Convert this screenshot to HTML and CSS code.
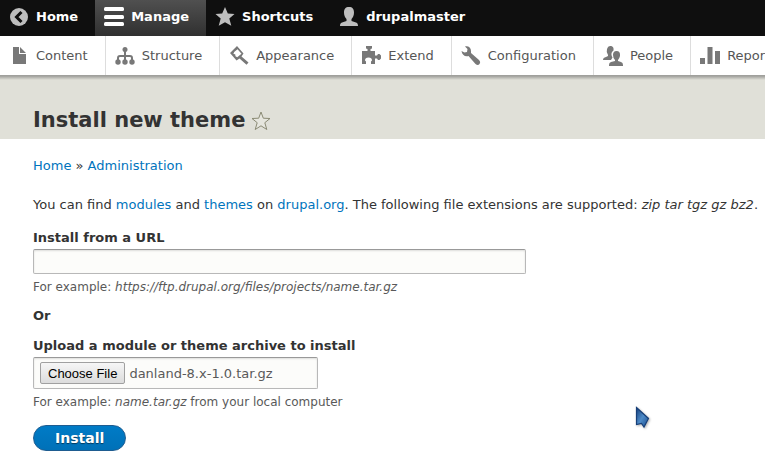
FILE: index.html
```html
<!DOCTYPE html>
<html lang="en">
<head>
<meta charset="utf-8">
<title>Install new theme</title>
<link rel="stylesheet" href="styles.css">
</head>
<body>
<nav class="bar" aria-label="Toolbar">
  <a class="tab" href="#"><svg class="icon" viewBox="0 0 20 20"><circle cx="10" cy="10" r="9" fill="#bebebe"/><path d="M12.500 5 7.500 10l5 5" fill="none" stroke="#0f0f0f" stroke-width="3"/></svg>Home</a>
  <a class="tab active" href="#"><svg class="icon" viewBox="0 0 20 20" fill="#fff"><rect y="0" width="20" height="4" rx="1.500"/><rect y="8" width="20" height="4" rx="1.500"/><rect y="15" width="20" height="4" rx="1.500"/></svg>Manage</a>
  <a class="tab" href="#"><svg class="icon" viewBox="0 0 20 20"><path d="M10 0l2.800 6.600 6.700.4-5.200 4.600 2 7.200L10 15.200l-6.300 3.600 2-7.200L.5 7l6.700-.4z" fill="#bebebe"/></svg>Shortcuts</a>
  <a class="tab" href="#"><svg class="icon" viewBox="0 0 20 20"><path d="M10 0c3.500 0 5 2 5 5.500 0 3-1 5-2.500 6.500v2l4.500 1.500c1.500.5 2 1.500 2 3.500H1c0-2 .5-3 2-3.500L7.500 14v-2C6 10.500 5 8.500 5 5.500 5 2 6.500 0 10 0z" fill="#bebebe"/></svg>drupalmaster</a>
</nav>
<nav class="tray" aria-label="Administration menu">
  <a class="item" href="#"><svg class="icon" viewBox="0 0 20 20"><path d="M4 1h6v7h7v10H4zM11 1l6 6h-6z"/></svg>Content</a>
  <a class="item" href="#"><svg class="icon" viewBox="0 0 20 20"><circle cx="10" cy="3.500" r="2.500"/><circle cx="3" cy="16" r="2.700"/><circle cx="10" cy="16" r="2.700"/><circle cx="17" cy="16" r="2.700"/><path d="M10 4v11M3 15v-3q0-2 2-2h10q2 0 2 2v3" fill="none" stroke="#787878" stroke-width="2"/></svg>Structure</a>
  <a class="item" href="#"><svg class="icon" viewBox="0 0 20 20"><path fill-rule="evenodd" d="M8 0 14.500 7.500 12.500 10.500 19.500 16.500 17.500 18.800 10.500 12.500 7.500 14.500 1 7zM8.500 3.200 5.200 6 4.400 8 6.200 8.300 6.500 10.200 8.200 11.300 12.500 7.800z"/></svg>Appearance</a>
  <a class="item" href="#"><svg class="icon" viewBox="0 0 20 20"><path d="M1 5h5.500V3L5 2.500V0h6v2.500L9.500 3v2H14v4.500h2l1-1.500h1.500l1.500 1.500v3L18.500 14H17l-1-1.500h-2V18h-4v-2.500l1-1q0-3-3.500-3t-3.500 3l1 1V18H1z"/></svg>Extend</a>
  <a class="item" href="#"><svg class="icon" viewBox="0 0 20 20"><path d="M4 .5c3-1 6 1 6 4.500v2l8 7q2 2 .5 4t-4 0l-7-8C4 11 1 9 .5 5l3 1.500L6 6l.5-3z"/></svg>Configuration</a>
  <a class="item" href="#"><svg class="icon" viewBox="0 0 20 20"><path d="M7 0c3 0 4 2 3.500 4.500C8 6 8 9 9.500 11.500L8 14H0q0-2.500 3-3l2-1V9Q3 6 4 3q.8-3 3-3z"/><path d="M13.500 5q4 0 3.500 5-.4 2-2 4v1l3 1q2 .7 2 3v1H6v-1q0-2.300 2-3l4-1v-1q-2-2-2-5 0-4 3.500-4z"/></svg>People</a>
  <a class="item" href="#"><svg class="icon" viewBox="0 0 20 20"><path d="M0 12h5v6H0zM7.500 1h5v17h-5zM15 5h5v13h-5z"/></svg>Reports</a>
</nav>
<header class="title">
  <h1>Install new theme</h1>
  <button class="star" type="button" aria-label="Add to shortcuts"><svg width="20" height="20" viewBox="0 0 20 20"><path d="M10 1l2.300 6.200 6.700.3-5.200 4.200 2 6.800L10 14.800l-5.800 3.700 2-6.800L1 7.500l6.700-.3z" fill="#e6e6de" stroke="#8a8a74"/></svg></button>
</header>
<main class="content">
  <nav class="crumbs" aria-label="Breadcrumb"><a href="#">Home</a> » <a href="#">Administration</a></nav>
  <p class="intro">You can find <a href="#">modules</a> and <a href="#">themes</a> on <a href="#">drupal.org</a>. The following file extensions are supported: <em>zip tar tgz gz bz2</em>.</p>
  <form>
    <label class="label" for="url">Install from a URL</label>
    <input class="field url" id="url" type="url">
    <p class="hint">For example: <em>https://ftp.drupal.org/files/projects/name.tar.gz</em></p>
    <p class="label or">Or</p>
    <label class="label" for="archive">Upload a module or theme archive to install</label>
    <input class="field file" id="archive" type="file">
    <p class="hint">For example: <em>name.tar.gz</em> from your local computer</p>
    <button class="install" type="button">Install</button>
  </form>
</main>
<svg class="pointer" width="16" height="24" viewBox="0 0 16 24" aria-hidden="true"><defs><linearGradient id="blue" x2="1" y2="1"><stop stop-color="#143f7c"/><stop offset=".5" stop-color="#4e8bc8"/><stop offset="1" stop-color="#164a8c"/></linearGradient></defs><path d="M1.500 1.500 13.500 12.500 9 21 6.500 17.500l-5 1z" fill="url(#blue)" stroke="#173f78" stroke-width="1.200"/></svg>
<script src="script.js"></script>
</body>
</html>
```
FILE: styles.css
```css
body {
  margin: 0;
  background: #fff;
  color: #333;
  font: 13px/20px "DejaVu Sans", sans-serif;
  overflow-x: hidden;
}
a { color: #0074bd; text-decoration: none; }
.bar, .tray { display: flex; white-space: nowrap; }
.bar { background: #0f0f0f; }
.tab, .item {
  display: flex;
  flex: none;
  align-items: center;
  gap: 7px;
  box-sizing: border-box;
  padding: 0 17px 0 9px;
}
.tab { height: 36px; padding-bottom: 3px; color: #fff; font-weight: bold; }
.active { background: linear-gradient(#505050, #303030); }
.icon { flex: none; width: 20px; height: 20px; }
.tray {
  overflow: hidden;
  background: #fff;
  border-bottom: 1px solid #a0a09c;
}
.item { height: 39px; border-right: 1px solid #ddd; color: #565656; }
.item .icon { fill: #787878; }
.title {
  display: flex;
  align-items: center;
  gap: 6px;
  padding: 29px 32px 3px 33px;
  background: linear-gradient(#a0a09c, #e0e0d8 4px);
}
h1 { margin: 0; font-size: 21px; line-height: 31px; }
.star { display: flex; padding: 0; border: 0; background: none; }
.content { padding: 17px 0 16px 33px; }
.intro { margin: 19px 0 13px; }
.label { display: block; margin: 0; font-weight: bold; }
.field {
  display: block;
  box-sizing: border-box;
  max-width: 100%;
  margin: 1px 0 3px;
  border: 1px solid #b8b8b8;
  border-top-color: #999;
  border-radius: 2px;
  background: #fcfcfa;
  box-shadow: inset 0 1px 2px rgba(0, 0, 0, .125);
  color: #595959;
  font: inherit;
}
.url { width: 493px; height: 25px; padding: 2px 6px; }
.file { width: 285px; height: 32px; padding: 4px 6px; }
.file::file-selector-button {
  box-sizing: border-box;
  height: 22px;
  margin: 0 4px 0 0;
  padding: 0 7px;
  border: 1px solid #a0a0a0;
  border-radius: 2px;
  background: linear-gradient(#f6f6f6, #dcdcdc);
  color: #000;
  font: 13px "Liberation Sans", sans-serif;
}
.hint { margin: 0; color: #595959; font-size: 12px; }
.or { margin: 9px 0 10px; }
.install {
  margin-top: 13px;
  height: 26px;
  padding: 0 21px;
  border: 1px solid #1e5c90;
  border-radius: 13px;
  background: linear-gradient(#007bc6, #0071b8);
  color: #fff;
  font: bold 14px "DejaVu Sans", sans-serif;
  text-shadow: 0 1px 1px rgba(0, 0, 0, .5);
}
.pointer { position: absolute; left: 635px; top: 406px; filter: drop-shadow(1px 1px 1px rgba(0, 0, 0, .3)); }
```
FILE: script.js
```js
// Preselect the archive in the file control.
const selection = new DataTransfer();
selection.items.add(new File([""], "danland-8.x-1.0.tar.gz"));
document.getElementById("archive").files = selection.files;
```
